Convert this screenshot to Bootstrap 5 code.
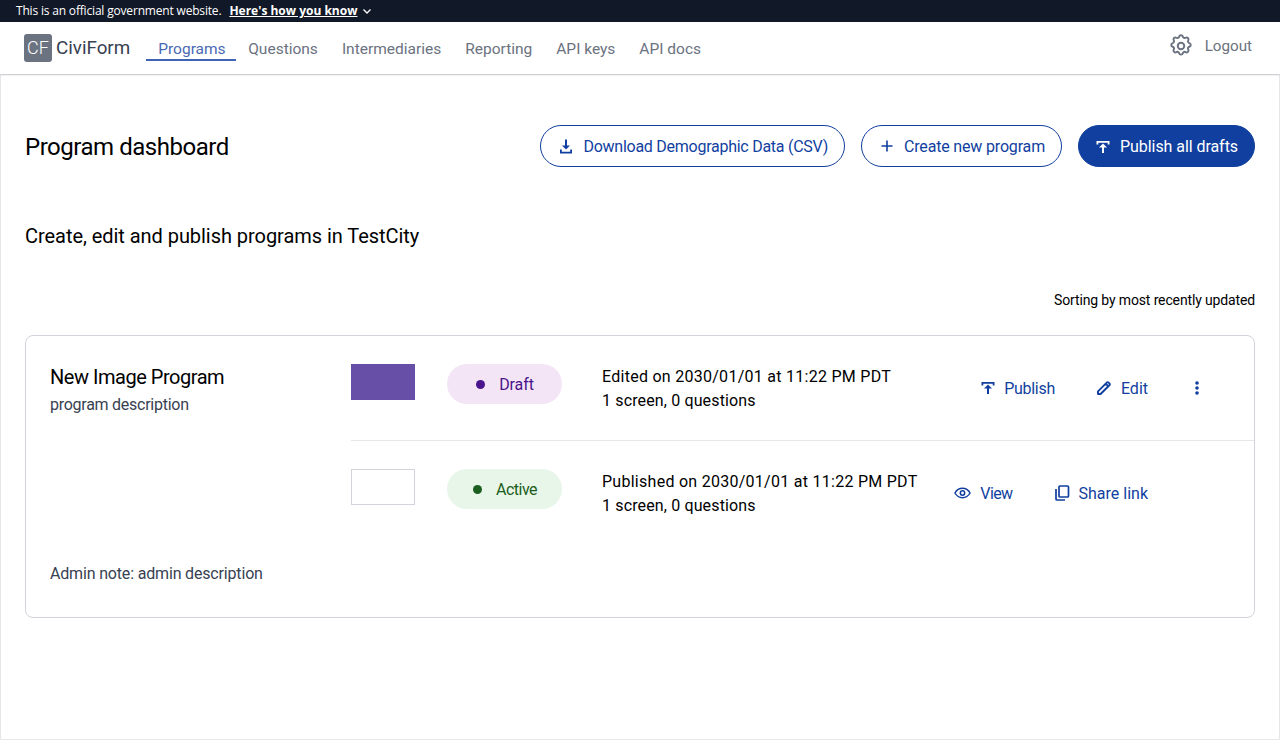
<!doctype html>
<html lang="en">
<head>
<meta charset="utf-8">
<title>Program dashboard</title>
<link rel="stylesheet" href="https://cdn.jsdelivr.net/npm/bootstrap@5.3.0/dist/css/bootstrap.min.css">
<style>
html,body{height:740px;overflow:hidden}
body{font-family:"Roboto","Liberation Sans",sans-serif;color:#000;background:#fff;font-size:16px}
.gov-bar{height:22px;background:#111827;color:#fff;font-family:"Open Sans",sans-serif;font-size:12px;line-height:22px;padding-left:16px;letter-spacing:-.18px;display:flex;align-items:center}
.gov-bar a{color:#fff;font-weight:700;margin-left:8px;letter-spacing:0}
.gov-bar svg{margin-left:4px}
.top-nav{height:52px;padding:0 24px;box-shadow:0 1px 2px rgba(0,0,0,.15);position:relative}
.cf-logo{width:28px;height:28px;background:#6b7280;color:#fff;border-radius:3px;font-size:18px;font-weight:300;line-height:28px;text-align:center}
.cf-name{font-size:18.8px;color:#374151;margin-left:4px;margin-right:16px}
.nav-item-link{font-size:15.5px;color:#6b7280;text-decoration:none;padding:0 12px;height:24px;line-height:24px;display:block;margin-top:2px}
.nav-item-link.on{color:#4a69b3;border-bottom:2px solid #3f63b5;width:90px}
.logout{font-size:15.2px;color:#6b7280;text-decoration:none}
.right-tools{margin-top:-4px;margin-right:4px;gap:11px}
.main-frame{height:666px;border:1px solid #e5e7eb;padding:50px 24px 0}
.head-row{height:42px}
.page-title{font-size:24px;font-weight:400;margin:0;padding-top:2px;letter-spacing:-.47px}
.pill-btn{height:42px;border-radius:21px;border:1px solid #113f9f;color:#113f9f;background:#fff;font-size:16px;padding:2px 16px 0 17px;display:inline-flex;align-items:center;gap:9px;text-decoration:none;letter-spacing:-.26px}
.pill-btn svg{margin-top:-2px}
.pill-btn.mid{letter-spacing:-.17px}
.pill-btn.fill{background:#113f9f;color:#fff;letter-spacing:-.06px;padding-left:16px}
.sub-title{font-size:20px;font-weight:400;margin:55px 0 0;line-height:28px;letter-spacing:-.05px}
.sort-note{font-size:14px;text-align:right;margin-top:40px;line-height:20px;letter-spacing:-.14px}
.prog-card{margin-top:25px;border:1px solid #d1d5db;border-radius:8px;height:283px;padding:28px 0 0 24px}
.prog-left{width:301px;flex:none}
.prog-name{font-size:20px;line-height:28px;letter-spacing:-.47px;margin-top:-1px}
.prog-desc{color:#374151;line-height:24px;margin-top:2px;letter-spacing:-.26px}
.prog-note{color:#374151;line-height:24px;margin-bottom:31px;letter-spacing:-.17px}
.prog-row{padding-right:24px}
.prog-row.first{padding-bottom:28px;border-bottom:1px solid #e5e7eb}
.prog-row.second{padding-top:28px;padding-right:90px}
.thumb{width:64px;height:36px;flex:none;margin-right:32px}
.thumb.purple{background:#674ea7}
.thumb.blank{border:1px solid #d1d5db}
.status{width:115px;height:40px;border-radius:20px;flex:none;margin-right:40px;display:flex;align-items:center;justify-content:center;gap:14px;letter-spacing:-.1px;padding-top:2px}
.status i{width:9px;height:9px;border-radius:50%;background:currentColor;display:block;margin-top:-2px}
.status.draft{background:#f3e5f5;color:#4a148c;padding-left:1px}
.status.live{background:#e8f5e9;color:#1b5e20;padding-left:1px;letter-spacing:-.5px}
.row-text{line-height:24px;margin-top:1px;margin-bottom:-1px}
.row-text .l1{letter-spacing:.27px}
.row-text .l2{letter-spacing:.14px}
.row-actions{margin-left:auto;height:48px}
.act{color:#113f9f;text-decoration:none;padding:2px 16px 0;display:inline-flex;align-items:center;gap:8px;height:48px}
.act svg{display:block;margin-top:-2px}
.act+.act:not(.kebab){margin-left:9px}
.act.tight{letter-spacing:-.3px}
.act.tighter{letter-spacing:-.6px;gap:9px}
.act.roomy{gap:9px}
.kebab{width:66px;justify-content:center;padding:0}
.kebab svg{margin-top:0}
</style>
</head>
<body>
<div class="gov-bar">This is an official government website. <a href="#">Here's how you know</a> <svg width="12" height="12" viewBox="0 0 12 12" fill="none" stroke="#fff" stroke-width="1.300"><path d="M2.500 4.500 6 8l3.500-3.500"/></svg></div>
<nav class="top-nav d-flex align-items-center">
  <div class="cf-logo">CF</div>
  <div class="cf-name">CiviForm</div>
  <a class="nav-item-link on" href="#">Programs</a>
  <a class="nav-item-link" href="#">Questions</a>
  <a class="nav-item-link" href="#">Intermediaries</a>
  <a class="nav-item-link" href="#">Reporting</a>
  <a class="nav-item-link" href="#">API keys</a>
  <a class="nav-item-link" href="#">API docs</a>
  <div class="ms-auto d-flex align-items-center right-tools">
    <svg width="26" height="26" viewBox="0 0 24 24" fill="none" stroke="#6b7280" stroke-width="1.800" stroke-linejoin="round"><path d="M10.300 3.300c.4-1.700 3-1.700 3.400 0a1.700 1.700 0 0 0 2.600 1.100c1.500-.9 3.300.8 2.400 2.400a1.700 1.700 0 0 0 1 2.500c1.700.4 1.700 3 0 3.400a1.700 1.700 0 0 0-1 2.600c.9 1.500-.9 3.300-2.400 2.400a1.700 1.700 0 0 0-2.600 1c-.4 1.700-3 1.700-3.400 0a1.700 1.700 0 0 0-2.600-1c-1.500.9-3.300-.9-2.400-2.400a1.700 1.700 0 0 0-1-2.600c-1.700-.4-1.700-3 0-3.400a1.700 1.700 0 0 0 1-2.500c-.9-1.600.9-3.300 2.400-2.400a1.700 1.700 0 0 0 2.600-1.100z"/><circle cx="12" cy="12" r="3"/></svg>
    <a class="logout" href="#">Logout</a>
  </div>
</nav>
<main class="main-frame">
  <div class="head-row d-flex align-items-center">
    <h1 class="page-title">Program dashboard</h1>
    <div class="ms-auto d-flex gap-3">
      <a class="pill-btn" href="#"><svg width="16" height="16" viewBox="0 0 16 16" fill="currentColor"><path d="M7 1.500h2v6h3L8 11.500l-4-4h3zM2 11.500h1.800v2.200h8.400v-2.200H14v4H2z"/></svg>Download Demographic Data (CSV)</a>
      <a class="pill-btn mid" href="#"><svg width="16" height="16" viewBox="0 0 16 16" fill="currentColor"><path d="M7.200 2.500h1.600v4.700h4.700v1.600H8.800v4.700H7.200V8.800H2.500V7.200h4.700z"/></svg>Create new program</a>
      <a class="pill-btn fill" href="#"><svg width="16" height="16" viewBox="0 0 16 16" fill="currentColor"><path d="M1.500 3h13v3.500h-1.800V4.800H3.300v1.700H1.500zM8 5.500l4 4H9v5.500H7V9.500H4z"/></svg>Publish all drafts</a>
    </div>
  </div>
  <h2 class="sub-title">Create, edit and publish programs in TestCity</h2>
  <div class="sort-note">Sorting by most recently updated</div>
  <section class="prog-card d-flex">
    <div class="prog-left d-flex flex-column">
      <div class="prog-name">New Image Program</div>
      <div class="prog-desc">program description</div>
      <div class="mt-auto prog-note">Admin note: admin description</div>
    </div>
    <div class="flex-grow-1">
      <div class="prog-row first d-flex align-items-start">
        <div class="thumb purple"></div>
        <div class="status draft"><i></i>Draft</div>
        <div class="row-text"><div class="l1">Edited on 2030/01/01 at 11:22 PM PDT</div><div class="l2">1 screen, 0 questions</div></div>
        <div class="row-actions d-flex">
          <a class="act tight" href="#"><svg width="16" height="16" viewBox="0 0 16 16" fill="currentColor"><path d="M1.500 2h13v3.500h-1.800V3.800H3.300v1.700H1.500zM8 4.500l4 4H9V14H7V8.500H4z"/></svg>Publish</a>
          <a class="act roomy" href="#"><svg width="16" height="16" viewBox="0 0 16 16" fill="none" stroke="currentColor" stroke-width="1.900" stroke-linejoin="round"><path d="M2 14v-2.600L11 2.400a.9.9 0 0 1 1.300 0l1.300 1.300a.9.9 0 0 1 0 1.300L4.600 14zM9.800 3.800l2.400 2.400"/></svg>Edit</a>
          <a class="act kebab" href="#" aria-label="More"><svg width="20" height="20" viewBox="0 0 20 20" fill="currentColor"><circle cx="10" cy="5" r="1.800"/><circle cx="10" cy="10" r="1.800"/><circle cx="10" cy="15" r="1.800"/></svg></a>
        </div>
      </div>
      <div class="prog-row second d-flex align-items-start">
        <div class="thumb blank"></div>
        <div class="status live"><i></i>Active</div>
        <div class="row-text"><div class="l1">Published on 2030/01/01 at 11:22 PM PDT</div><div class="l2">1 screen, 0 questions</div></div>
        <div class="row-actions d-flex">
          <a class="act tighter" href="#"><svg width="17" height="18" viewBox="0 0 18 18" fill="none" stroke="currentColor" stroke-width="1.600"><path d="M1 9c2-3.500 4.800-5 8-5s6 1.500 8 5c-2 3.500-4.800 5-8 5s-6-1.500-8-5z"/><circle cx="9" cy="9" r="2.300"/></svg>View</a>
          <a class="act roomy" href="#"><svg width="16" height="16" viewBox="0 0 16 16" fill="none" stroke="currentColor" stroke-width="1.700"><rect x="5" y="1" width="9.500" height="11" rx="1"/><path d="M2 4v10a1 1 0 0 0 1 1h8"/></svg>Share link</a>
        </div>
      </div>
    </div>
  </section>
</main>
</body>
</html>
